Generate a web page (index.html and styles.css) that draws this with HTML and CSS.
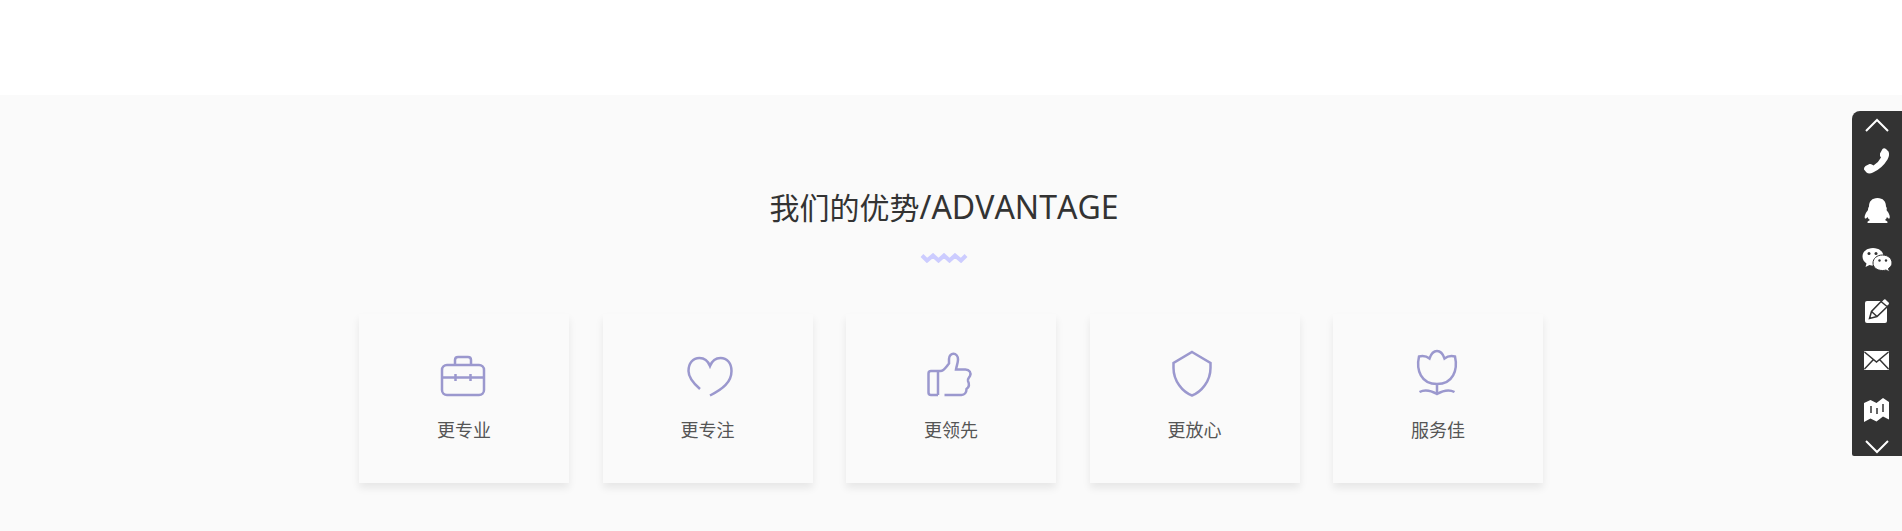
FILE: index.html
```html
<!DOCTYPE html>
<html lang="zh-CN">
<head>
    <meta charset="UTF-8">
    <meta name="viewport" content="width=device-width, initial-scale=1.0">
    <title>我们的优势</title>
    <link rel="stylesheet" href="styles.css">
</head>
<body>

    <section class="advantage">
        <div class="title">
            <h2>我们的优势<span class="en">/ADVANTAGE</span></h2>
            <svg class="wave" width="48" height="10" viewBox="0 0 48 10">
                <path d="M2 2.5L7 7.5L13 2.5L18.500 7.500L24 2.500L29.500 7.500L35 2.500L41 7.500L46 2.500"/>
            </svg>
        </div>

        <ul class="cards">
            <li class="card">
                <svg class="card-icon" width="54" height="48" viewBox="0 0 54 48">
                    <rect x="5" y="16" width="42" height="30" rx="5"/>
                    <path d="M18 16V11q0-3 3-3h10q3 0 3 3v5M5 28.500h42M18.500 25v7M33.500 25v7"/>
                </svg>
                <p>更专业</p>
            </li>
            <li class="card">
                <svg class="card-icon" width="54" height="48" viewBox="0 0 54 48">
                    <path d="M19 40C12 34 7.500 28 7.500 22C7.500 14 12 9 18.500 9C24 9 27 12 29 17C31 12 34 9 39.500 9C46 9 50.500 14 50.500 22C50.500 33 42 40 29 46.500"/>
                </svg>
                <p>更专注</p>
            </li>
            <li class="card">
                <svg class="card-icon" width="54" height="48" viewBox="0 0 54 48">
                    <path d="M14 46H7q-2.500 0-2.500-2.500v-19Q4.500 22 7 22h9.500C20 22 22 18 25 14.500V10C25 3 34 3 34 10.500C34 14 32.500 17 32 20.500H41.500C45.500 20.500 47.500 24 46 27C45 29 43.500 29.500 44 32C46 36 44.500 38.500 42.500 40C42.500 43.500 40.500 46 37.500 46H20.500M14 22v24"/>
                </svg>
                <p>更领先</p>
            </li>
            <li class="card">
                <svg class="card-icon" width="54" height="48" viewBox="0 0 54 48">
                    <path d="M24 3L42.500 14V19C42.500 32 33.500 43 24 46.500C14.500 43 5.500 32 5.500 19V14Z"/>
                </svg>
                <p>更放心</p>
            </li>
            <li class="card">
                <svg class="card-icon" width="54" height="48" viewBox="0 0 54 48">
                    <path d="M18.500 9.500C20 5 23 2 26 2C29 2 32 5 33.500 9.500C36 7.500 40 6.500 44 7.500C47 21 42 35 26 35C10 35 5 21 8 7.500C12 6.500 16 7.500 18.500 9.500ZM26 35v10M8.500 43C14 40 20 41.500 26 45C32 41.500 38 40 43.500 43"/>
                </svg>
                <p>服务佳</p>
            </li>
        </ul>
    </section>

    <nav class="toolbar">
        <button class="arrow arrow-up" aria-label="收起">
            <svg width="24" height="14" viewBox="0 0 24 14"><path d="M1 13L12 2L23 13"/></svg>
        </button>
        <a href="#" aria-label="电话">
            <svg width="30" height="30" viewBox="0 0 30 30">
                <path d="M20.500 3Q22 1.500 24 3L26.500 5.500Q28 9 25.500 13.500Q20 22.500 11 26.500Q7 28.500 4.500 26.500L2 23.500Q1.500 21.500 3.500 20L7.500 18Q9.500 17.500 11.500 19.500Q16.500 16.500 19 11.500Q17.500 9.500 18 7.500Z"/>
            </svg>
        </a>
        <a href="#" aria-label="QQ">
            <svg width="30" height="30" viewBox="0 0 30 30">
                <path d="M15.500 2C10 2 7 5.500 7 10.500C6 12 6 13 6 14C3.500 17 2 20.500 3 22.500C4 23 5 21.500 5.500 21Q6 23 8 24Q4 26 6 27H25Q27 26 23 24Q24.500 23 25 21C25.500 21.500 26.500 23 27.500 22.500C28.500 20.500 27 17 24.500 14C25 13 25 12 24 10.500C24 5.500 21 2 15.500 2Z"/>
            </svg>
        </a>
        <a href="#" aria-label="微信">
            <svg width="30" height="30" viewBox="0 0 30 30">
                <path d="M11 2C5 2 .500 5.500 .500 10.500C.500 13.500 2 15.500 4.500 17.500L3.500 21L7.500 19Q9 19.500 12 19.500C17 19 21.500 15.500 21.500 10.500C21.500 5.500 17 2 11 2Z"/>
                <path class="edge" d="M20.500 9C15 9 11 12.500 11 17C11 21.500 15 24.500 20.500 24.500Q22.500 24.500 24 24L27.500 26L26.500 22.500C28.500 21 30 19.500 30 17C30 12.500 26 9 20.500 9Z"/>
                <g class="dark"><circle cx="7" cy="7.500" r="1.500"/><circle cx="14" cy="7.500" r="1.500"/><circle cx="17.500" cy="14.500" r="1.200"/><circle cx="24" cy="14.500" r="1.200"/></g>
            </svg>
        </a>
        <a href="#" aria-label="留言">
            <svg width="30" height="30" viewBox="0 0 30 30">
                <rect x="3" y="5" width="22" height="22" rx="2"/>
                <path class="pencil" d="M7.500 22.500L9.500 15.500L21 3.500Q22.500 2 24 3L27 6Q28.500 7 27 9L15 20.500ZM9.500 15.500L15 20.500M19 5.500L25 10.500"/>
            </svg>
        </a>
        <a href="#" aria-label="邮箱">
            <svg width="30" height="30" viewBox="0 0 30 30">
                <rect x="2" y="5" width="25" height="19" rx="1"/>
                <path class="line" d="M2.500 6L14.500 16L26.500 6M2.500 23L11 14M26.500 23L18 14"/>
            </svg>
        </a>
        <a href="#" aria-label="地图">
            <svg width="30" height="30" viewBox="0 0 30 30">
                <path d="M2 7L8.500 4L14.500 7L21 2L27 6V23.500L21 20.500L14.500 25.500L8.500 22.500L2 26Z"/>
                <path class="line" d="M9 10v7M15 12v6M21 8v8"/>
            </svg>
        </a>
        <button class="arrow arrow-down" aria-label="展开">
            <svg width="24" height="14" viewBox="0 0 24 14"><path d="M1 1L12 12L23 1"/></svg>
        </button>
    </nav>

</body>
</html>
```

FILE: styles.css
```css
body {
    margin: 0;
    padding-top: 95px;
    background-color: #fff;
    font-family: "Open Sans", "Noto Sans CJK SC", sans-serif;
}
.advantage {
    padding: 90px 20px 48px;
    background-color: #fafafa;
}
.title {
    display: flex;
    flex-direction: column;
    align-items: center;
    padding-right: 14px;
}
.title h2 {
    margin: 0 0 22px;
    color: #333;
    font-size: 30px;
    font-weight: 400;
    line-height: 46px;
}
.title .en {
    font-family: "Noto Sans", sans-serif;
    font-size: 32px;
    font-kerning: none;
    line-height: 1;
}
.wave {
    fill: none;
    stroke: #ccccff;
    stroke-width: 4;
}
.cards {
    display: flex;
    justify-content: space-between;
    max-width: 1184px;
    margin: 51px auto 0;
    padding: 0;
    list-style: none;
}
.card {
    display: flex;
    flex-direction: column;
    align-items: center;
    box-sizing: border-box;
    width: 210px;
    padding: 35px 0 39px;
    background-color: #fafafa;
    box-shadow: 0 5px 8px rgba(0, 0, 0, 0.08);
}
.card-icon {
    fill: none;
    stroke: #9b98ce;
    stroke-width: 2.5;
}
.card p {
    margin: 20px 0 0;
    color: #555;
    font-size: 18px;
    line-height: 27px;
}

/* floating contact bar */
.toolbar {
    position: fixed;
    top: 111px;
    right: 0;
    display: flex;
    flex-direction: column;
    width: 50px;
    background-color: #333;
    border-radius: 8px 0 0 2px;
}
.toolbar a {
    display: flex;
    align-items: center;
    justify-content: center;
    height: 50px;
    fill: #fff;
}
.arrow {
    display: flex;
    justify-content: center;
    width: 100%;
    padding: 0;
    background: none;
    border: none;
    cursor: pointer;
}
.arrow-up {
    height: 25px;
    padding-top: 7px;
}
.arrow-down {
    height: 20px;
    padding-top: 4px;
}
.arrow path {
    fill: none;
    stroke: #fff;
    stroke-width: 2;
}
.toolbar .dark {
    fill: #333;
}
.toolbar .edge {
    stroke: #333;
    stroke-width: 1;
}
.toolbar .pencil {
    stroke: #333;
    stroke-width: 1.5;
}
.toolbar .line {
    fill: none;
    stroke: #333;
    stroke-width: 1.5;
}
```
